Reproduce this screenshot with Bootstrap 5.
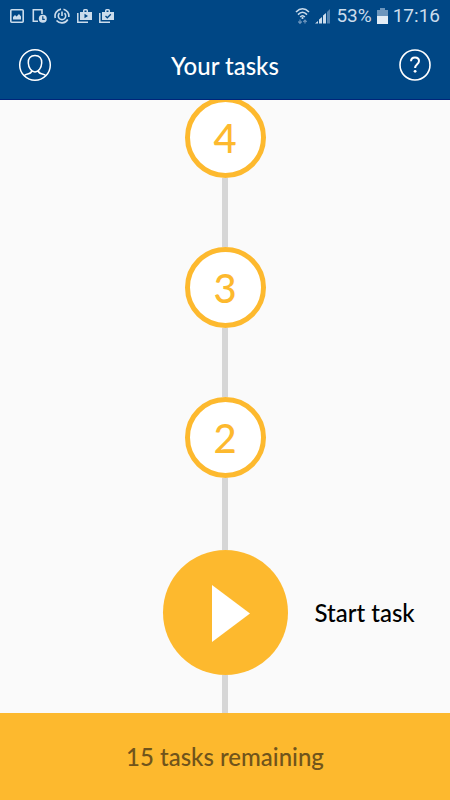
<!DOCTYPE html>
<html lang="en">
<head>
<meta charset="utf-8">
<meta name="viewport" content="width=device-width, initial-scale=1">
<title>Your tasks</title>
<link href="https://cdn.jsdelivr.net/npm/bootstrap@5.3.0/dist/css/bootstrap.min.css" rel="stylesheet">
<style>
body { font-family: Lato, "Open Sans", sans-serif; background: #fafafa; color: #000; font-size: 24px; line-height: 32px; font-weight: 500; }
.app-header { background: #004785; color: #fff; border-bottom: 1px solid #00257a; }
.status-bar { height: 32px; padding: 0 10px 0 9px; color: #cbdcec; font-family: Roboto, sans-serif; font-size: 19px; line-height: 32px; font-weight: 400; }
.notices { gap: 7px; }
.signals { gap: 5px; }
.title-bar { height: 67px; padding: 0 18px 2px; }
.page-title { font-size: 24px; line-height: 32px; font-weight: 500; padding-top: 2px; }
.step { width: 81px; height: 81px; border: 5px solid #fdb92e; background: #fff; color: #fdb92e; font-size: 40px; line-height: 40px; font-weight: 500; }
.step:hover { background: #fff4dc; color: #fdb92e; }
.rail { width: 6px; height: 69px; background: #d6d6d6; }
.rail-long { height: 72px; }
.rail-end { height: 38px; }
.start-row { display: grid; grid-template-columns: 1fr auto 1fr; align-items: center; }
.play { width: 125px; height: 125px; background: #fdb92e; }
.start-label { padding-left: 27px; }
.app-footer { height: 87px; background: #fdb92e; color: #70541b; }
svg { display: block; }
</style>
</head>
<body class="d-flex flex-column vh-100 overflow-hidden">
<header class="app-header flex-shrink-0">
  <div class="status-bar d-flex align-items-center justify-content-between">
    <div class="notices d-flex align-items-center">
      <svg width="16" height="16" viewBox="0 0 16 16"><rect x="1.800" y="1.800" width="12.400" height="12.400" rx="1" fill="none" stroke="#cbdcec" stroke-width="1.600"/><path d="M4 11.500V9l2-2 1.500 1.500L10 6l2 2.500v3z" fill="#cbdcec"/></svg>
      <svg width="15" height="16" viewBox="0 0 15 16" fill="none" stroke="#cbdcec" stroke-width="1.600"><path d="M10 6V1.800H1.300v11.400H6"/><circle cx="10.800" cy="10.800" r="4" fill="#cbdcec" stroke="none"/><path d="M10.800 8.300v3h2" stroke="#004785" stroke-width="1.200"/></svg>
      <svg width="16" height="16" viewBox="0 0 16 16" fill="none" stroke="#cbdcec" stroke-width="1.600"><path d="M9.500 1.200A7 7 0 0 1 14.800 9M13.800 11.500A7 7 0 0 1 2.500 12.500M1.300 10A7 7 0 0 1 7 1.100"/><path d="M5.500 5.200A3.700 3.700 0 1 0 10.500 5.200M8 3.500V8"/></svg>
      <svg width="15" height="16" viewBox="0 0 15 16"><path d="M.8 5v9.200H11" fill="none" stroke="#cbdcec" stroke-width="1.500"/><path d="M3 4h3V2.500Q6 1 7.500 1h2Q11 1 11 2.500V4h4v8H3zM7.500 4h2V2.500h-2z" fill="#cbdcec" fill-rule="evenodd"/><path d="M7.500 5.800v4.400L11 8z" fill="#004785"/></svg>
      <svg width="15" height="16" viewBox="0 0 15 16"><path d="M.8 5v9.200H11" fill="none" stroke="#cbdcec" stroke-width="1.500"/><path d="M3 4h3V2.500Q6 1 7.500 1h2Q11 1 11 2.500V4h4v8H3zM7.500 4h2V2.500h-2z" fill="#cbdcec" fill-rule="evenodd"/><path d="M6.500 8l1.800 1.800 3.500-3.500" fill="none" stroke="#004785" stroke-width="1.300"/></svg>
    </div>
    <div class="signals d-flex align-items-center">
      <svg width="15" height="18" viewBox="0 0 15 18" fill="none" stroke="#cbdcec" stroke-width="1.600"><path d="M1 5Q7.500-1.500 14 5M3 7.600Q7.500 3 12 7.600M5.200 10Q7.500 7.500 9.800 10"/><circle cx="7.500" cy="11" r="1.100" fill="#cbdcec" stroke="none"/><path d="M5 12.500V16M3.300 14.500L5 16.300l1.700-1.800M10 16.500V13M8.300 14.800L10 13l1.700 1.800" stroke="#6d96bd" stroke-width="1.200"/></svg>
      <svg width="16" height="16" viewBox="0 0 16 16" fill="#cbdcec"><path d="M0 15.500l3-2.500v2.500zM4 15.500v-4L7 9v6.500zM8 15.500V7.500L11 5v10.500z"/><path d="M12 15.500V4l3-3v14.500z" fill="#5585b2"/></svg>
      <span>53%</span>
      <svg width="11" height="16" viewBox="0 0 11 16"><path d="M3 0h5v2h3v6H0V2h3z" fill="#6d96bd"/><path d="M0 8h11v8H0z" fill="#e3edf6"/></svg>
      <span>17:16</span>
    </div>
  </div>
  <div class="title-bar d-flex align-items-center justify-content-between">
    <button type="button" class="btn p-0 border-0" aria-label="Profile">
      <svg width="34" height="34" viewBox="0 0 34 34" fill="none" stroke="#fff" stroke-width="1.500"><circle cx="17" cy="17" r="15.300"/><path d="M17 7.500c-4.500 0-7 3-6.700 7.500.2 4.500 3 9 6.700 9s6.500-4.500 6.700-9c.3-4.500-2.200-7.500-6.700-7.500zM13.500 22.500c.3 2-1 2.800-3 3.300-2 .5-3.500 1-4.500 2M20.500 22.500c-.3 2 1 2.800 3 3.300 2 .5 3.500 1 4.500 2"/></svg>
    </button>
    <h1 class="page-title m-0">Your tasks</h1>
    <button type="button" class="btn p-0 border-0" aria-label="Help">
      <svg width="34" height="34" viewBox="0 0 34 34" fill="none" stroke="#fff"><circle cx="17" cy="17" r="15" stroke-width="1.600"/><path d="M13 13.300c0-2.500 1.600-3.900 4-3.900s4 1.400 4 3.600c0 3.200-3.900 3.300-3.900 7" stroke-width="2"/><circle cx="17.100" cy="23.300" r="1.400" fill="#fff" stroke="none"/></svg>
    </button>
  </div>
</header>
<main class="flex-fill d-flex flex-column align-items-center justify-content-end overflow-hidden">
  <button type="button" class="step btn rounded-circle p-0 flex-shrink-0">4</button>
  <div class="rail flex-shrink-0"></div>
  <button type="button" class="step btn rounded-circle p-0 flex-shrink-0">3</button>
  <div class="rail flex-shrink-0"></div>
  <button type="button" class="step btn rounded-circle p-0 flex-shrink-0">2</button>
  <div class="rail rail-long flex-shrink-0"></div>
  <div class="start-row w-100 flex-shrink-0">
    <span></span>
    <button type="button" id="start" class="play btn rounded-circle p-0 border-0" aria-label="Start task">
      <svg width="125" height="125" viewBox="0 0 125 125" fill="#fff"><path d="M49 35v57l38-28.500z"/></svg>
    </button>
    <label for="start" class="start-label">Start task</label>
  </div>
  <div class="rail rail-end flex-shrink-0"></div>
</main>
<footer class="app-footer flex-shrink-0 d-flex align-items-center justify-content-center">15 tasks remaining</footer>
<script src="https://cdn.jsdelivr.net/npm/bootstrap@5.3.0/dist/js/bootstrap.bundle.min.js"></script>
</body>
</html>
